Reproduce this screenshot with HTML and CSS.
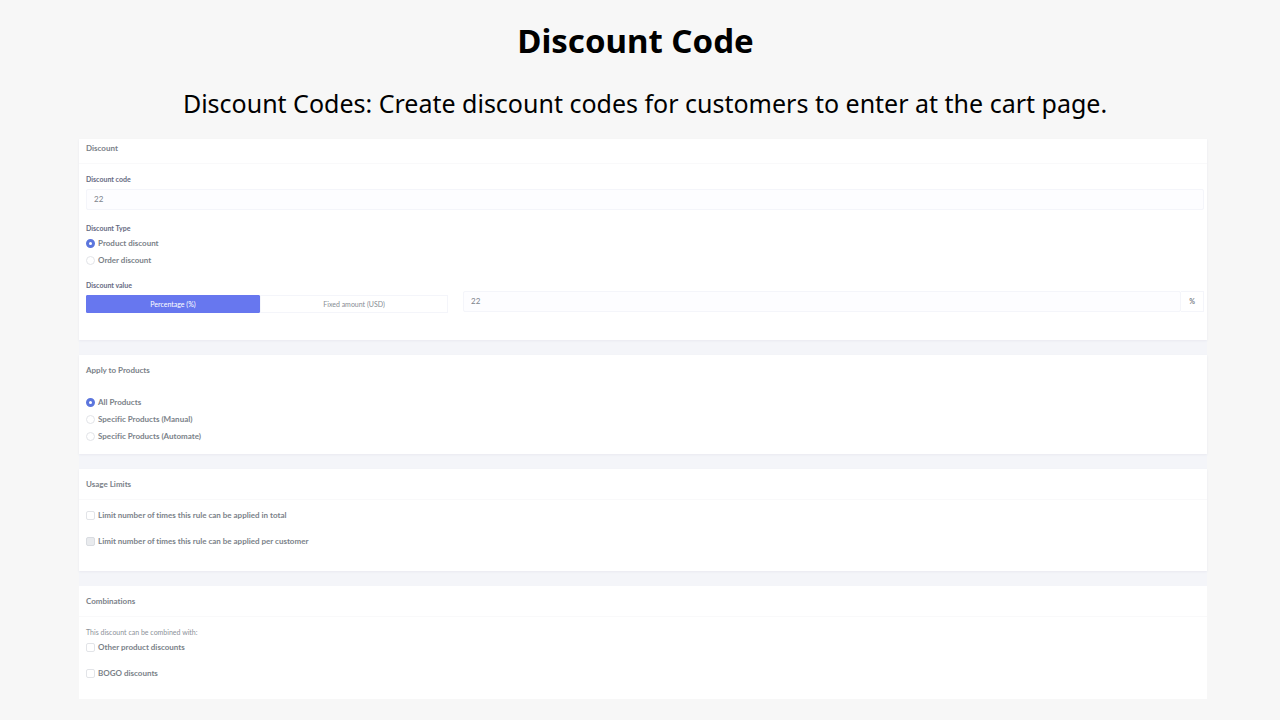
FILE: index.html
```
<!DOCTYPE html>
<html lang="en">
<head>
    <meta charset="UTF-8">
    <title>Discount Code</title>
    <link rel="stylesheet" href="styles.css">
</head>
<body>
    <header class="intro">
        <h1>Discount Code</h1>
        <p>Discount Codes: Create discount codes for customers to enter at the cart page.</p>
    </header>

    <form class="panel">
        <!-- Discount -->
        <section class="card card-discount">
            <h2 class="card-header">Discount</h2>
            <div class="card-body">
                <div class="form-group">
                    <label class="form-label" for="code">Discount code</label>
                    <input type="text" class="form-control" id="code" value="22">
                </div>

                <fieldset class="form-group">
                    <legend class="form-label">Discount Type</legend>
                    <label class="option"><input type="radio" name="discountType" checked>Product discount</label>
                    <label class="option"><input type="radio" name="discountType">Order discount</label>
                </fieldset>

                <div class="form-group">
                    <label class="form-label" for="value">Discount value</label>
                    <div class="value-row">
                        <div class="toggle">
                            <button type="button" class="toggle-button active">Percentage (%)</button>
                            <button type="button" class="toggle-button">Fixed amount (USD)</button>
                        </div>
                        <div class="input-group">
                            <input type="text" class="form-control" id="value" value="22">
                            <span class="suffix">%</span>
                        </div>
                    </div>
                </div>
            </div>
        </section>

        <!-- Products -->
        <section class="card card-products">
            <h2 class="card-header">Apply to Products</h2>
            <div class="card-body">
                <label class="option"><input type="radio" name="products" checked>All Products</label>
                <label class="option"><input type="radio" name="products">Specific Products (Manual)</label>
                <label class="option"><input type="radio" name="products">Specific Products (Automate)</label>
            </div>
        </section>

        <!-- Limits -->
        <section class="card card-limits">
            <h2 class="card-header">Usage Limits</h2>
            <div class="card-body spaced">
                <label class="option"><input type="checkbox">Limit number of times this rule can be applied in total</label>
                <label class="option"><input type="checkbox" disabled>Limit number of times this rule can be applied per customer</label>
            </div>
        </section>

        <!-- Combinations -->
        <section class="card card-combinations">
            <h2 class="card-header">Combinations</h2>
            <div class="card-body">
                <p class="hint">This discount can be combined with:</p>
                <div class="spaced">
                    <label class="option"><input type="checkbox">Other product discounts</label>
                    <label class="option"><input type="checkbox">BOGO discounts</label>
                </div>
            </div>
        </section>
    </form>
</body>
</html>
```

FILE: styles.css
```
* {
    box-sizing: border-box;
}
body {
    margin: 0;
    background: #f7f7f7;
    color: #7b8289;
    font-family: Lato, sans-serif;
    font-size: 8px;
    font-variant-ligatures: none;
}
h1, h2, p, fieldset, legend {
    margin: 0;
    padding: 0;
    border: 0;
}
.intro {
    padding: 16px 0 0;
    text-align: center;
    color: #000;
    font-family: "Noto Sans", sans-serif;
}
.intro h1 {
    padding-right: 9px;
    font-size: 33px;
    line-height: 50px;
}
.intro p {
    padding-left: 10px;
    margin-top: 18px;
    font-size: 25px;
    line-height: 38px;
}
.panel {
    display: flex;
    flex-direction: column;
    gap: 15px;
    margin: 17px 73px 21px 79px;
    background: #f4f5f9;
}
.card {
    background: #fff;
    box-shadow: 0 1px 2px #e9eaf0;
}
.card-header {
    padding: 1px 7px 0;
    border-bottom: 1px solid #f9f9fa;
    font-size: 8px;
    line-height: 29px;
}
.card-body {
    padding: 8px 3px 9px 7px;
}
.card-discount .card-header {
    padding: 0 7px 6px;
    line-height: 18px;
}
.card-discount .card-body {
    padding-top: 9px;
    padding-bottom: 27px;
}
.card-products .card-header {
    border-color: #fff;
}
.card-limits .card-body {
    padding-top: 7px;
    padding-bottom: 21px;
}
.card-combinations {
    box-shadow: none;
}
.card-combinations .card-body {
    padding-top: 9px;
    padding-bottom: 17px;
}
.form-group + .form-group {
    margin-top: 11px;
}
.form-group + .form-group:last-child {
    margin-top: 10px;
}
.form-label {
    display: block;
    color: #666b82;
    font-size: 7px;
    font-weight: bold;
    line-height: 12px;
}
legend.form-label {
    line-height: 14px;
}
.form-control {
    display: block;
    width: 100%;
    height: 21px;
    padding: 0 7px 2px;
    border: 1px solid #f4f5fa;
    border-radius: 2px;
    background: #fdfdff;
    color: #7b8289;
    font-family: inherit;
    font-size: 8px;
}
.form-label + .form-control {
    margin-top: 4px;
}
.option {
    display: flex;
    align-items: center;
    gap: 3px;
    font-weight: bold;
    line-height: 17px;
}
.option input {
    appearance: none;
    width: 9px;
    height: 9px;
    margin: 0;
    border: 1px solid #e2e4e8;
    border-radius: 2px;
    background: #fff;
}
.option input[type="radio"] {
    border-radius: 50%;
}
.option input[type="radio"]:checked {
    border: 3px solid #5c76dd;
}
.option input:disabled {
    border-color: #d9dce1;
    background: #e9ebee;
}
.spaced {
    display: flex;
    flex-direction: column;
    gap: 9px;
}
.value-row {
    display: grid;
    grid-template-columns: 362fr 741fr;
    gap: 15px;
}
.toggle {
    display: flex;
    height: 18px;
    margin-top: 4px;
}
.toggle-button {
    flex: 188;
    padding: 0;
    border: 1px solid #f4f5fa;
    background: #fff;
    color: #868c93;
    font-family: inherit;
    font-size: 7px;
}
.toggle-button.active {
    flex: 174;
    border-color: #6777ef;
    border-radius: 1px;
    background: #6777ef;
    color: #fff;
}
.input-group {
    display: flex;
    align-items: flex-start;
}
.input-group .form-control {
    flex: 1;
}
.suffix {
    width: 23px;
    border: 1px solid #f4f5fa;
    border-left: 0;
    font-size: 7px;
    font-weight: bold;
    line-height: 19px;
    text-align: center;
}
.hint {
    color: #8c9299;
    font-size: 7px;
    line-height: 12px;
}
.hint + .spaced {
    margin-top: 1px;
}
```
